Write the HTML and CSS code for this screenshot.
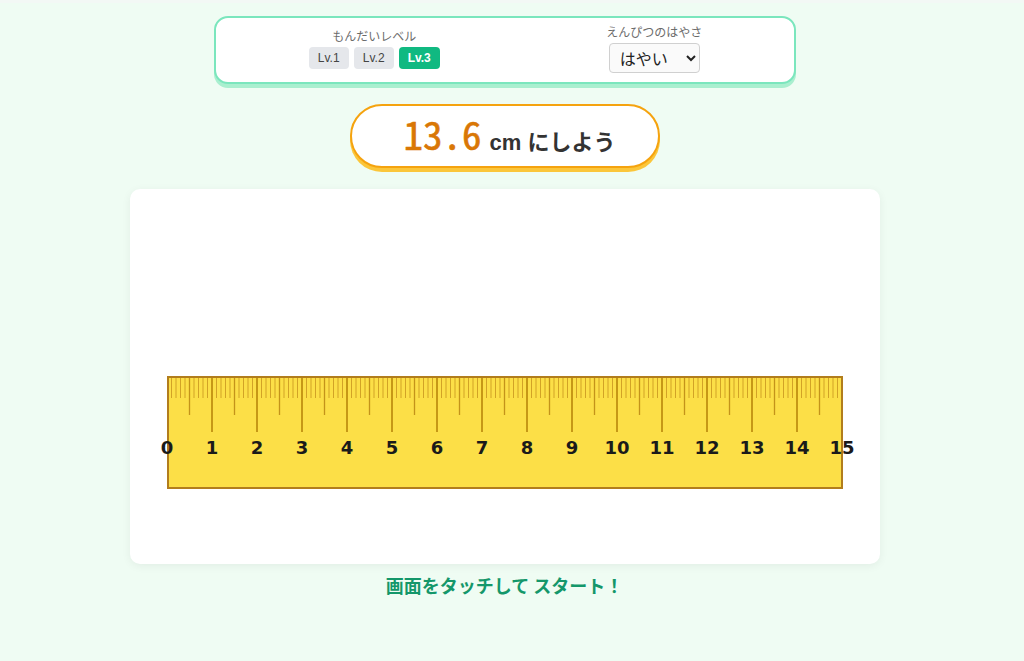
FILE: index.html
```html
<!DOCTYPE html>
<html lang="ja">
  <head>
    <meta charset="UTF-8" />
    <meta name="viewport" content="width=device-width, initial-scale=1.0" />
    <title>ものさしゲーム</title>
    <link rel="stylesheet" href="styles.css">
  </head>
  <body>
    <div class="topline"></div>
    <div class="page">
      <div class="settings">
        <div class="group">
          <span class="label">もんだいレベル</span>
          <div class="levels">
            <button class="level">Lv.1</button>
            <button class="level">Lv.2</button>
            <button class="level active">Lv.3</button>
          </div>
        </div>
        <div class="group">
          <span class="label">えんぴつのはやさ</span>
          <select class="speed">
            <option>はやい</option>
            <option>ふつう</option>
            <option>ゆっくり</option>
          </select>
        </div>
      </div>

      <div class="target">
        <span class="target-num">13.6</span>
        <span class="target-text">cm にしよう</span>
      </div>

      <div class="board">
        <svg id="ruler" class="ruler" width="676" height="113" viewBox="0 0 676 113">
          <rect x="1" y="1" width="674" height="111" fill="#fcdf47" stroke="#b27d1c" stroke-width="2" />
          <g id="ticks"></g>
          <g id="nums" class="nums"></g>
        </svg>
      </div>

      <p class="start">画面をタッチして スタート！</p>
    </div>

    <script>
      const ticks = document.getElementById("ticks");
      const nums = document.getElementById("nums");
      const ns = "http://www.w3.org/2000/svg";

      for (let i = 1; i < 150; i++) {
        const x = i * 4.5;
        let len = 22, color = "#d2a326", w = 1;
        if (i % 10 === 0) {
          len = 56; color = "#b8860b"; w = 1.6;
        } else if (i % 5 === 0) {
          len = 39; color = "#c4931a"; w = 1.3;
        }
        const line = document.createElementNS(ns, "line");
        line.setAttribute("x1", x);
        line.setAttribute("x2", x);
        line.setAttribute("y1", 2);
        line.setAttribute("y2", len);
        line.setAttribute("stroke", color);
        line.setAttribute("stroke-width", w);
        ticks.appendChild(line);
      }

      for (let n = 0; n <= 15; n++) {
        const t = document.createElementNS(ns, "text");
        t.setAttribute("x", n * 45);
        t.setAttribute("y", 78);
        t.setAttribute("text-anchor", "middle");
        t.textContent = n;
        nums.appendChild(t);
      }
    </script>
  </body>
</html>
```

FILE: styles.css
```css
body {
  margin: 0;
  padding: 0;
  background-color: #effcf3;
  font-family: "Liberation Sans", "Noto Sans CJK JP", sans-serif;
  color: #333;
}
.topline {
  height: 3px;
  background-color: #f3f8f5;
}
.page {
  width: 1009px;
  padding-top: 13px;
  display: flex;
  flex-direction: column;
  align-items: center;
}
.settings {
  width: 582px;
  height: 68px;
  box-sizing: border-box;
  background: white;
  border: 2px solid #7be6bd;
  border-radius: 14px;
  box-shadow: 0 4px 0 #a9efcf;
  display: flex;
  justify-content: space-around;
  align-items: center;
  padding: 0 8px 3px 10px;
}
.group {
  display: flex;
  flex-direction: column;
  align-items: center;
  gap: 4px;
}
.label {
  font-family: "Noto Sans CJK JP", sans-serif;
  font-size: 12px;
  color: #6b6b6b;
  line-height: 14px;
}
.levels {
  display: flex;
  gap: 5px;
}
.level {
  width: 40px;
  height: 22px;
  padding: 0;
  border: none;
  border-radius: 4px;
  background-color: #e5e7eb;
  color: #444;
  font-family: "Liberation Sans", sans-serif;
  font-size: 12px;
  font-weight: 500;
}
.level.active {
  width: 41px;
  background-color: #10b981;
  color: white;
  font-weight: bold;
}
.speed {
  width: 91px;
  height: 30px;
  border: 1px solid #d0d0d0;
  border-radius: 4px;
  background-color: #fafafa;
  font-family: "Noto Sans CJK JP", sans-serif;
  font-size: 16px;
  color: #222;
  padding: 0 6px;
}
.target {
  margin-top: 20px;
  width: 310px;
  height: 64px;
  box-sizing: border-box;
  background: white;
  border: 2px solid #f5a30f;
  border-radius: 32px;
  box-shadow: 0 4px 0 #fbc63a;
  display: flex;
  justify-content: center;
  align-items: baseline;
  gap: 8px;
  padding: 0 0 6px 10px;
}
.target-num {
  font-family: "Noto Sans Mono CJK JP", "Liberation Mono", monospace;
  font-size: 39px;
  font-weight: normal;
  color: #d97706;
  line-height: 54px;
  -webkit-text-stroke: 0.6px #d97706;
}
.target-text {
  font-family: "Liberation Sans", "Noto Sans CJK JP", sans-serif;
  font-size: 22px;
  font-weight: bold;
  color: #333;
}
.board {
  margin-top: 21px;
  width: 750px;
  height: 375px;
  box-sizing: border-box;
  background: white;
  border-radius: 10px;
  box-shadow: 0 2px 10px rgba(0, 0, 0, 0.06);
  display: flex;
  justify-content: center;
  align-items: flex-end;
  padding-bottom: 75px;
}
.ruler {
  overflow: visible;
}
.nums {
  font-family: "DejaVu Sans", sans-serif;
  font-size: 18px;
  font-weight: bold;
  fill: #1a1a1a;
}
.start {
  margin: 8px 0 0;
  font-family: "Noto Sans CJK JP", sans-serif;
  font-size: 18px;
  font-weight: bold;
  color: #14976a;
}
```
